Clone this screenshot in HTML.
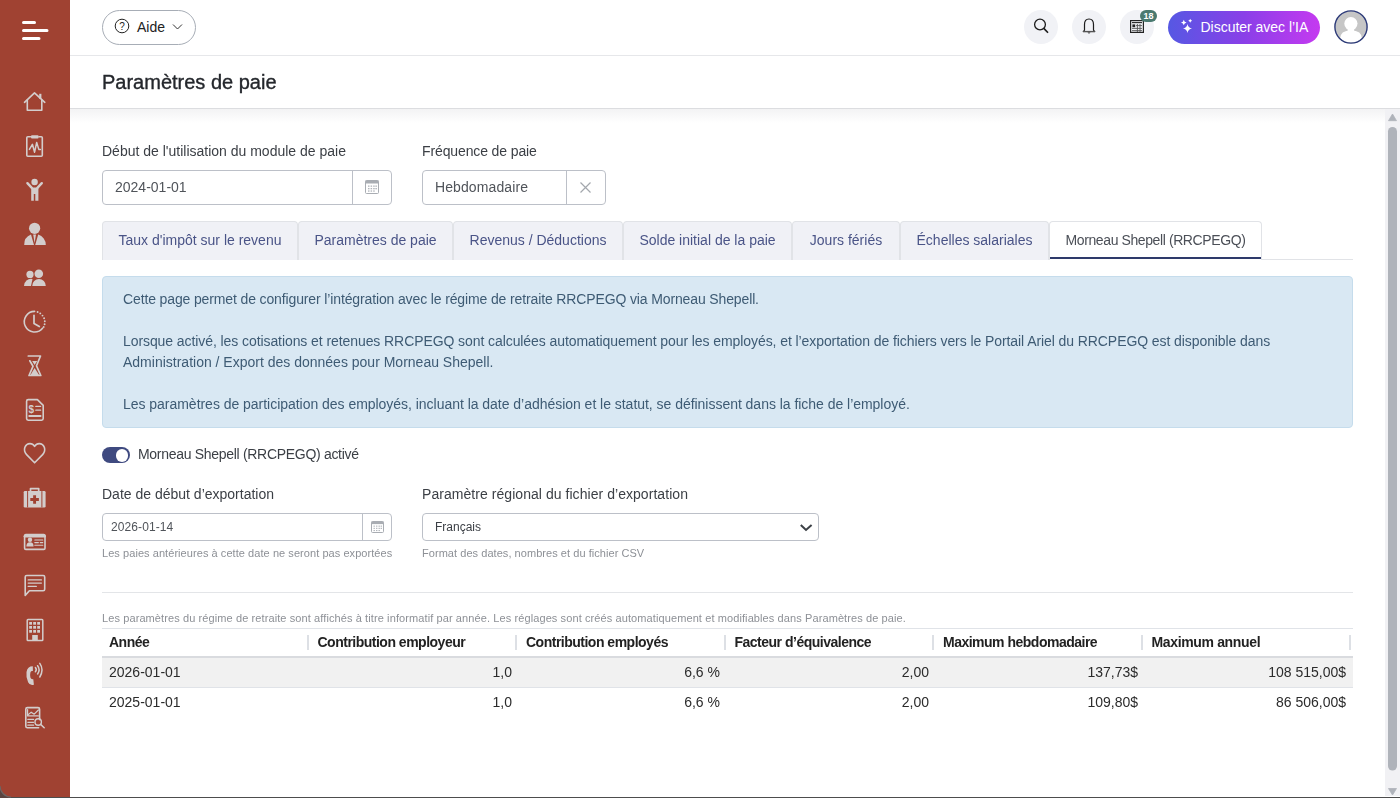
<!DOCTYPE html>
<html><head><meta charset="utf-8">
<style>
*{box-sizing:border-box;margin:0;padding:0}
html,body{width:1400px;height:798px;overflow:hidden;background:#fff}
body{font-family:"Liberation Sans",sans-serif;color:#333;position:relative}
.a{position:absolute;white-space:nowrap}
#side{position:absolute;left:0;top:0;width:70px;height:798px;background:#a04232}
#hdr{position:absolute;left:70px;top:0;width:1330px;height:56px;border-bottom:1px solid #e6e7ea;background:#fff}
#ttl{position:absolute;left:70px;top:56px;width:1330px;height:53px;border-bottom:1px solid #dcdde0;background:#fff}
#shadow{position:absolute;left:70px;top:109px;width:1315px;height:14px;background:linear-gradient(#f3f3f4,#fff)}
.t14{font-size:14px;line-height:14px}
.lbl{color:#3b3f45}
.inp{position:absolute;border:1px solid #bcc0c8;border-radius:4px;background:#fff}
.tab{position:absolute;top:221px;height:39px;border:1px solid #e1e3e7;border-bottom:none;border-radius:4px 4px 0 0;background:#f0f1f6;color:#4a5487;font-size:14px;line-height:14px;text-align:center;padding-top:11px}
.tab.act{background:#fff;color:#4b4f57}
.help{font-size:11px;line-height:11px;color:#8d9096}
th,td{font-size:14px}
</style></head><body>

<div id="side">
<svg width="70" height="798" style="position:absolute;left:0;top:0" fill="none" stroke="#d3cdcc" stroke-width="1.6" stroke-linecap="round" stroke-linejoin="round">
 <!-- hamburger -->
 <g stroke="#fff" stroke-width="3"><path d="M23.5 22.5H34.5M23.5 30.5H47M23.5 38.5H39"/></g>
 <!-- home -->
 <path d="M24.5 102.3L34.5 92.8L44.8 102.3"/><path d="M27.3 100V110.3H41.8V100"/><rect x="39.2" y="93.8" width="2.2" height="5" fill="#d3cdcc" stroke="none"/>
 <!-- clipboard -->
 <path d="M30.5 136.8H27.8Q26.8 136.8 26.8 137.8V155.3Q26.8 156.3 27.8 156.3H41.3Q42.3 156.3 42.3 155.3V137.8Q42.3 136.8 41.3 136.8H39"/>
 <rect x="31" y="135.2" width="7.6" height="3.4" rx="1" fill="#d3cdcc" stroke="none"/>
 <path d="M29.4 149.4L32.4 144.3L34.6 152.2L36.7 142.4L38.8 149.4H40.4" stroke-width="1.5"/>
 <!-- child -->
 <g fill="#d3cdcc" stroke="none"><circle cx="34.6" cy="182" r="3.2"/><path d="M31.2 187.5H38.4V200.8H35.3V194H33.8V200.8H31.2Z"/></g>
 <path d="M27.4 183.2L31.8 187.8M41.8 183.2L37.4 187.8" stroke-width="2.4"/>
 <!-- person tie -->
 <g fill="#d3cdcc" stroke="none"><circle cx="34.6" cy="228.3" r="5.6"/>
 <path d="M24.2 245A10.8 10.8 0 0 1 31 234.6L34 245ZM45.8 245A10.8 10.8 0 0 0 38.2 234.6L35.2 245Z"/>
 <path d="M33.2 234.6H36L34.6 243Z"/></g>
 <!-- group -->
 <g fill="#d3cdcc" stroke="none"><circle cx="30" cy="274.4" r="3.6"/><circle cx="38.8" cy="273.8" r="4.3"/>
 <path d="M24 286A7 7 0 0 1 32.5 279L31 286Z"/><path d="M32.2 286A7 7 0 0 1 39 279A7 7 0 0 1 45.8 286Z"/></g>
 <!-- clock -->
 <path d="M34.6 311.4A10.3 10.3 0 1 0 42.6 328.2"/>
 <g fill="#d3cdcc" stroke="none"><circle cx="37.6" cy="312" r="0.95"/><circle cx="40.3" cy="313.4" r="0.95"/><circle cx="42.5" cy="315.6" r="0.95"/><circle cx="44.1" cy="318.3" r="0.95"/><circle cx="44.8" cy="321.3" r="0.95"/><circle cx="44.6" cy="324.3" r="0.95"/><circle cx="43.7" cy="327" r="0.9"/></g>
 <path d="M34 315.3V323.4L39.3 326.5" stroke-width="1.7"/>
 <!-- hourglass -->
 <path d="M28.3 356H40.5L36.5 365.8L40.8 375.5H29L33 366.3L29.8 360.8" stroke-width="1.7"/>
 <path d="M30.5 375H39L34.6 368Z" fill="#d3cdcc" stroke="none"/><path d="M32.2 361H37.2L34.6 365Z" fill="#d3cdcc" stroke="none"/>
 <!-- doc $ -->
 <path d="M37.4 399.6H28.2Q26.6 399.6 26.6 401.2V418.6Q26.6 420.2 28.2 420.2H41.6Q43.2 420.2 43.2 418.6V405.4Z"/>
 <path d="M35.8 406.4H40.6M35.8 410.2H40.6" stroke-width="1.3"/><path d="M29.2 416H40.6" stroke-width="1.8"/>
 <text x="31.4" y="413" font-family="Liberation Sans" font-size="10" font-weight="700" fill="#d3cdcc" stroke="none" text-anchor="middle">$</text>
 <!-- heart -->
 <path d="M34.6 462.8L26.6 454.6Q23.6 451.4 24.8 447.6Q26.2 443.6 30 443.6Q32.8 443.6 34.6 446.4Q36.4 443.6 39.2 443.6Q43 443.6 44.4 447.6Q45.6 451.4 42.6 454.6Z"/>
 <!-- medkit -->
 <path d="M25 491H44.3Q45.6 491 45.6 492.3V506.3Q45.6 507.6 44.3 507.6H25Q23.7 507.6 23.7 506.3V492.3Q23.7 491 25 491Z" fill="#d3cdcc" stroke="none"/>
 <path d="M30.5 491V488.6H38.7V491" stroke-width="1.7"/>
 <path d="M27.6 491.5V507M41.9 491.5V507" stroke="#a04232" stroke-width="1"/>
 <path d="M34.6 495.2V503.8M30.3 499.5H38.9" stroke="#a04232" stroke-width="2.9" stroke-linecap="butt"/>
 <!-- id card -->
 <rect x="24.6" y="534.6" width="20.4" height="14.8" rx="1.2"/><path d="M24.8 536.2H44.8" stroke-width="2.4"/>
 <g fill="#d3cdcc" stroke="none"><circle cx="30" cy="539.8" r="2.2"/><path d="M26.4 546.6Q26.4 542.3 30 542.3Q33.6 542.3 33.6 546.6Z"/></g>
 <path d="M34.8 540H42.8M34.8 542.6H38.4M40.2 542.6H42.8M34.8 545.2H42.8" stroke-width="1.1"/>
 <!-- chat -->
 <path d="M25.2 595.4V577Q25.2 575.5 26.7 575.5H43.2Q44.7 575.5 44.7 577V589.2Q44.7 590.7 43.2 590.7H29.4Z"/>
 <path d="M28.2 579.9H41.4M28.2 583.1H41.4M28.2 586.4H36.3" stroke-width="1.3"/>
 <!-- building -->
 <rect x="27.2" y="619.6" width="15.6" height="21" rx="0.8" stroke-width="1.5"/>
 <g fill="#d3cdcc" stroke="none">
 <rect x="29.2" y="622" width="2.8" height="2.7"/><rect x="33.2" y="622" width="2.8" height="2.7"/><rect x="37.2" y="622" width="2.8" height="2.7"/>
 <rect x="29.2" y="626" width="2.8" height="2.7"/><rect x="33.2" y="626" width="2.8" height="2.7"/><rect x="37.2" y="626" width="2.8" height="2.7"/>
 <rect x="29.2" y="630" width="2.8" height="2.7"/><rect x="33.2" y="630" width="2.8" height="2.7"/><rect x="37.2" y="630" width="2.8" height="2.7"/>
 <rect x="32.2" y="635" width="5.6" height="5.8"/></g>
 <!-- phone -->
 <path d="M32.8 666.3Q27.4 666.3 26.5 672Q25.8 677.6 28.1 682.2Q30 686 33.9 684.7L33.3 679.2Q30.9 679.5 30.4 677.6Q29.8 675 30.4 672.4Q30.9 670.7 32.9 671Z" fill="#d3cdcc" stroke="none"/>
 <path d="M35.4 667.5Q37.2 669.6 35.4 671.8M37.6 665.7Q40.6 669.6 37.6 674M39.8 663.4Q44.2 669.6 39.8 677" stroke-width="1.5"/>
 <!-- report -->
 <path d="M39.6 719.6V709.2Q39.6 707.6 38 707.6H27.4Q25.8 707.6 25.8 709.2V726.2Q25.8 727.8 27.4 727.8H38.6" stroke-width="1.6"/>
 <path d="M27.6 709.5V715.9H38.4M28.2 714.6L31.2 712.2L34.2 714.2L38.4 710" stroke-width="1.2"/>
 <path d="M27.8 719.4H33.6M27.8 722.3H33.6M27.8 725.2H33.6" stroke-width="1.2"/>
 <circle cx="38.2" cy="722" r="3.2" stroke-width="1.4"/><path d="M40.6 724.4L44.2 727.8" stroke-width="1.5"/>
</svg>
</div>

<div id="hdr">
 <div class="a" style="left:32px;top:10px;width:94px;height:35px;border:1px solid #a7adb6;border-radius:18px"></div>
 <svg class="a" style="left:44px;top:18px" width="16" height="16" viewBox="0 0 16 16"><circle cx="8" cy="8" r="6.8" fill="none" stroke="#222" stroke-width="1"/><text x="8" y="11.5" font-family="Liberation Sans" font-size="10" font-weight="400" text-anchor="middle" fill="#222">?</text></svg>
 <div class="a" style="left:67px;top:20px;font-size:14px;line-height:14px;color:#222">Aide</div>
 <svg class="a" style="left:102px;top:23px" width="11" height="8" viewBox="0 0 11 8"><path d="M1 1.5L5.5 6L10 1.5" fill="none" stroke="#333" stroke-width="1"/></svg>

 <div class="a" style="left:954px;top:10px;width:34px;height:34px;border-radius:50%;background:#f1f2f6"></div>
 <svg class="a" style="left:963px;top:17px" width="16" height="18" viewBox="0 0 16 18"><circle cx="7" cy="7.5" r="5.4" fill="none" stroke="#1c1c1c" stroke-width="1.3"/><path d="M10.8 11.4L15 15.8" stroke="#1c1c1c" stroke-width="1.6"/></svg>
 <div class="a" style="left:1002px;top:10px;width:34px;height:34px;border-radius:50%;background:#f1f2f6"></div>
 <svg class="a" style="left:1012px;top:17px" width="14" height="18" viewBox="0 0 14 18"><path d="M1.5 14.5L2.5 13V7.5Q2.5 2 7 2Q11.5 2 11.5 7.5V13L12.5 14.5Z" fill="none" stroke="#1c1c1c" stroke-width="1.2"/><path d="M1 14.6H13" stroke="#555" stroke-width="1.4"/><path d="M5.5 15.5Q7 17.5 8.5 15.5" fill="#1c1c1c"/></svg>
 <div class="a" style="left:1050px;top:10px;width:34px;height:34px;border-radius:50%;background:#f1f2f6"></div>
 <svg class="a" style="left:1060px;top:20px" width="14" height="13" viewBox="0 0 14 13"><rect x="0.6" y="0.6" width="12.8" height="11.8" fill="none" stroke="#222" stroke-width="1.2"/><path d="M2 2.6H12" stroke="#222" stroke-width="1.1"/><rect x="2.4" y="4.4" width="2.8" height="2.8" fill="#222"/><path d="M6 5.6H12M2 8.4H12M2 10.6H12M7.4 4V12M10 4V12" stroke="#555" stroke-width="0.9"/></svg>
 <div class="a" style="left:1070px;top:10px;width:17px;height:12px;border-radius:6px;background:#4a7a70;color:#fff;font-size:9px;line-height:12px;font-weight:700;text-align:center">18</div>

 <div class="a" style="left:1098px;top:11px;width:152px;height:33px;border-radius:17px;background:linear-gradient(90deg,#5658e3,#8a3fe8 50%,#c53af0)"></div>
 <svg class="a" style="left:1110px;top:18px" width="14" height="16" viewBox="0 0 14 16"><path d="M7.5 5.9Q8.1 9.8 12 10.4Q8.1 11 7.5 14.9Q6.9 11 3 10.4Q6.9 9.8 7.5 5.9Z" fill="#fff"/><path d="M3.8 1.7Q4.2 4.1 6.6 4.5Q4.2 4.9 3.8 7.3Q3.4 4.9 1 4.5Q3.4 4.1 3.8 1.7Z" fill="#fff"/><path d="M10.2 0.7Q10.5 2.4 12.2 2.7Q10.5 3 10.2 4.7Q9.9 3 8.2 2.7Q9.9 2.4 10.2 0.7Z" fill="#fff"/></svg>
 <div class="a" style="left:1130.5px;top:20px;font-size:14px;line-height:14px;color:#fff;letter-spacing:-0.02px">Discuter avec l’IA</div>

 <svg class="a" style="left:1264px;top:10px" width="34" height="34" viewBox="0 0 34 34"><defs><clipPath id="avc"><circle cx="17" cy="17" r="15.6"/></clipPath></defs><circle cx="17" cy="17" r="16" fill="#c6c6c6"/><g clip-path="url(#avc)" fill="#fff"><circle cx="16.9" cy="13.6" r="6.6"/><rect x="13.6" y="17" width="6.6" height="5"/><path d="M6 34V29Q6 20.6 17 20.6Q28 20.6 28 29V34Z"/></g><circle cx="17" cy="17" r="16.1" fill="none" stroke="#2c3a78" stroke-width="1.4"/></svg>
</div>

<div id="main" style="position:absolute;left:0;top:0;width:1400px;height:798px;will-change:transform">
<div id="ttl">
 <div class="a" style="left:32px;top:16px;font-size:20px;line-height:20px;color:#24272c;font-weight:400;-webkit-text-stroke:0.35px #24272c">Paramètres de paie</div>
</div>
<div id="shadow"></div>

<!-- form row 1 -->
<div class="a t14 lbl" style="left:102px;top:144px">Début de l'utilisation du module de paie</div>
<div class="inp" style="left:102px;top:170px;width:290px;height:35px"></div>
<div class="a" style="left:352px;top:171px;width:1px;height:33px;background:#bcc0c8"></div>
<div class="a t14" style="left:115px;top:180px;color:#50545a">2024-01-01</div>
<svg class="a" style="left:365px;top:180px" width="14" height="14" viewBox="0 0 14 14"><rect x="0.5" y="0.5" width="13" height="13" rx="1" fill="none" stroke="#a9adb3"/><rect x="0.5" y="0.5" width="13" height="3" fill="#a9adb3"/><g fill="#b0b4ba"><rect x="3" y="5.5" width="1.5" height="1.3"/><rect x="5.6" y="5.5" width="1.5" height="1.3"/><rect x="8.2" y="5.5" width="1.5" height="1.3"/><rect x="10.4" y="5.5" width="1.5" height="1.3"/><rect x="3" y="8" width="1.5" height="1.3"/><rect x="5.6" y="8" width="1.5" height="1.3"/><rect x="8.2" y="8" width="1.5" height="1.3"/><rect x="10.4" y="8" width="1.5" height="1.3"/><rect x="3" y="10.4" width="1.5" height="1.3"/><rect x="5.6" y="10.4" width="1.5" height="1.3"/><rect x="8.2" y="10.4" width="1.5" height="1.3"/></g></svg>

<div class="a t14 lbl" style="left:422px;top:144px;letter-spacing:-0.12px">Fréquence de paie</div>
<div class="inp" style="left:422px;top:170px;width:184px;height:35px"></div>
<div class="a" style="left:566px;top:171px;width:1px;height:33px;background:#bcc0c8"></div>
<div class="a t14" style="left:435px;top:180px;color:#50545a;letter-spacing:0.1px">Hebdomadaire</div>
<svg class="a" style="left:579px;top:181px" width="13" height="13" viewBox="0 0 13 13"><path d="M1.5 1.5L11.5 11.5M11.5 1.5L1.5 11.5" stroke="#a3a7ad" stroke-width="1.2"/></svg>

<!-- tabs -->
<div class="a" style="left:102px;top:259px;width:1251px;height:1px;background:#e1e3e7"></div>
<div class="tab" style="left:102px;width:196px">Taux d'impôt sur le revenu</div>
<div class="tab" style="left:298px;width:155px">Paramètres de paie</div>
<div class="tab" style="left:453px;width:170px">Revenus / Déductions</div>
<div class="tab" style="left:623px;width:169px">Solde initial de la paie</div>
<div class="tab" style="left:792px;width:108px">Jours fériés</div>
<div class="tab" style="left:900px;width:149px">Échelles salariales</div>
<div class="tab act" style="left:1049px;width:213px;letter-spacing:-0.4px">Morneau Shepell (RRCPEGQ)</div>
<div class="a" style="left:1050px;top:257px;width:211px;height:2px;background:#2e3a6b"></div>

<!-- info box -->
<div class="a" style="left:102px;top:276px;width:1251px;height:152px;background:#d9e8f3;border:1px solid #c5dcec;border-radius:4px"></div>
<div class="a" style="left:123px;top:288.6px;font-size:14px;line-height:21px;color:#3e5b74">
<div style="letter-spacing:-0.13px">Cette page permet de configurer l’intégration avec le régime de retraite RRCPEGQ via Morneau Shepell.</div>
<div style="height:21px"></div>
<div style="letter-spacing:-0.08px">Lorsque activé, les cotisations et retenues RRCPEGQ sont calculées automatiquement pour les employés, et l’exportation de fichiers vers le Portail Ariel du RRCPEGQ est disponible dans</div>
<div>Administration / Export des données pour Morneau Shepell.</div>
<div style="height:21px"></div>
<div style="letter-spacing:-0.03px">Les paramètres de participation des employés, incluant la date d’adhésion et le statut, se définissent dans la fiche de l’employé.</div>
</div>

<!-- toggle -->
<div class="a" style="left:102px;top:447px;width:28px;height:16px;border-radius:8px;background:#3f4a80"></div>
<div class="a" style="left:115.5px;top:449px;width:12.5px;height:12.5px;border-radius:50%;background:#fff"></div>
<div class="a t14 lbl" style="left:138px;top:447px;letter-spacing:-0.3px">Morneau Shepell (RRCPEGQ) activé</div>

<!-- form row 2 -->
<div class="a t14 lbl" style="left:102px;top:487px">Date de début d’exportation</div>
<div class="inp" style="left:102px;top:513px;width:290px;height:28px"></div>
<div class="a" style="left:362px;top:514px;width:1px;height:26px;background:#bcc0c8"></div>
<div class="a" style="left:111px;top:521px;font-size:12px;line-height:12px;color:#50545a;letter-spacing:0.1px">2026-01-14</div>
<svg class="a" style="left:371px;top:521px" width="13" height="12" viewBox="0 0 13 12"><rect x="0.5" y="0.5" width="12" height="11" rx="1" fill="none" stroke="#a9adb3"/><rect x="0.5" y="0.5" width="12" height="2.6" fill="#a9adb3"/><g fill="#b0b4ba"><rect x="2.5" y="4.6" width="1.4" height="1.1"/><rect x="5" y="4.6" width="1.4" height="1.1"/><rect x="7.5" y="4.6" width="1.4" height="1.1"/><rect x="9.6" y="4.6" width="1.4" height="1.1"/><rect x="2.5" y="6.8" width="1.4" height="1.1"/><rect x="5" y="6.8" width="1.4" height="1.1"/><rect x="7.5" y="6.8" width="1.4" height="1.1"/><rect x="9.6" y="6.8" width="1.4" height="1.1"/><rect x="2.5" y="9" width="1.4" height="1.1"/><rect x="5" y="9" width="1.4" height="1.1"/><rect x="7.5" y="9" width="1.4" height="1.1"/></g></svg>
<div class="a help" style="left:102px;top:548px;letter-spacing:0.06px">Les paies antérieures à cette date ne seront pas exportées</div>

<div class="a t14 lbl" style="left:422px;top:487px;letter-spacing:0.05px">Paramètre régional du fichier d’exportation</div>
<div class="inp" style="left:422px;top:513px;width:397px;height:28px"></div>
<div class="a" style="left:435px;top:521px;font-size:12px;line-height:12px;color:#3b3f45">Français</div>
<svg class="a" style="left:799px;top:522px" width="15" height="11" viewBox="0 0 15 11"><path d="M1.8 3L7 8L12.6 3" fill="none" stroke="#3c4046" stroke-width="2"/></svg>
<div class="a help" style="left:422px;top:548px;letter-spacing:0.05px">Format des dates, nombres et du fichier CSV</div>

<div class="a" style="left:102px;top:592px;width:1251px;height:1px;background:#e3e5e8"></div>
<div class="a help" style="left:102px;top:612.5px;letter-spacing:0.1px">Les paramètres du régime de retraite sont affichés à titre informatif par année. Les réglages sont créés automatiquement et modifiables dans Paramètres de paie.</div>

<!-- table -->
<div class="a" style="left:102px;top:628px;width:1251px;height:1px;background:#e0e3e8"></div>
<div class="a" style="left:102px;top:656px;width:1251px;height:2px;background:#d9dbdf"></div>
<div class="a" style="left:102px;top:658px;width:1251px;height:29px;background:#f1f1f1"></div>
<div class="a" style="left:102px;top:687px;width:1251px;height:1px;background:#e0e3e8"></div>

<div class="a" style="left:307px;top:635px;width:2px;height:15px;background:#dde0e5"></div>
<div class="a" style="left:515px;top:635px;width:2px;height:15px;background:#dde0e5"></div>
<div class="a" style="left:724px;top:635px;width:2px;height:15px;background:#dde0e5"></div>
<div class="a" style="left:932px;top:635px;width:2px;height:15px;background:#dde0e5"></div>
<div class="a" style="left:1141px;top:635px;width:2px;height:15px;background:#dde0e5"></div>
<div class="a" style="left:1349px;top:635px;width:2px;height:15px;background:#dde0e5"></div>

<div class="a t14" style="left:109px;top:635px;font-weight:700;color:#222;letter-spacing:-0.5px">Année</div>
<div class="a t14" style="left:317.5px;top:635px;font-weight:700;color:#222;letter-spacing:-0.5px">Contribution employeur</div>
<div class="a t14" style="left:526px;top:635px;font-weight:700;color:#222;letter-spacing:-0.5px">Contribution employés</div>
<div class="a t14" style="left:734.5px;top:635px;font-weight:700;color:#222;letter-spacing:-0.5px">Facteur d’équivalence</div>
<div class="a t14" style="left:943px;top:635px;font-weight:700;color:#222;letter-spacing:-0.5px">Maximum hebdomadaire</div>
<div class="a t14" style="left:1151.5px;top:635px;font-weight:700;color:#222;letter-spacing:-0.35px">Maximum annuel</div>

<div class="a t14" style="left:109px;top:665px;color:#2b2b2b">2026-01-01</div>
<div class="a t14" style="right:888px;top:665px;color:#2b2b2b">1,0</div>
<div class="a t14" style="right:680px;top:665px;color:#2b2b2b">6,6 %</div>
<div class="a t14" style="right:471px;top:665px;color:#2b2b2b">2,00</div>
<div class="a t14" style="right:262px;top:665px;color:#2b2b2b">137,73$</div>
<div class="a t14" style="right:54px;top:665px;color:#2b2b2b">108 515,00$</div>

<div class="a t14" style="left:109px;top:695px;color:#2b2b2b">2025-01-01</div>
<div class="a t14" style="right:888px;top:695px;color:#2b2b2b">1,0</div>
<div class="a t14" style="right:680px;top:695px;color:#2b2b2b">6,6 %</div>
<div class="a t14" style="right:471px;top:695px;color:#2b2b2b">2,00</div>
<div class="a t14" style="right:262px;top:695px;color:#2b2b2b">109,80$</div>
<div class="a t14" style="right:54px;top:695px;color:#2b2b2b">86 506,00$</div>

</div>
<!-- scrollbar -->
<div class="a" style="left:1385px;top:109px;width:15px;height:687px;background:#f1f1f4"></div>
<svg class="a" style="left:1385px;top:109px" width="15" height="687" viewBox="0 0 15 687"><path d="M3.5 11.7H11.5L7.5 5Z" fill="#afb3ba" stroke="#afb3ba" stroke-width="0.8" stroke-linejoin="round"/><rect x="3" y="18" width="9" height="643.5" rx="4.5" fill="#afb3ba"/><path d="M3.5 679.5H11.5L7.5 686Z" fill="#afb3ba" stroke="#afb3ba" stroke-width="0.8" stroke-linejoin="round"/></svg>
<div class="a" style="left:0;top:797px;width:1400px;height:1px;background:#4d4d4d"></div>
<svg class="a" style="left:0;top:786px" width="12" height="12" viewBox="0 0 12 12"><path d="M0 0A11 11 0 0 0 11 11V12H0Z" fill="#5b4440"/><path d="M0 0A11 11 0 0 0 11 11" fill="none" stroke="#6e6664" stroke-width="1.2"/></svg>
</body></html>
